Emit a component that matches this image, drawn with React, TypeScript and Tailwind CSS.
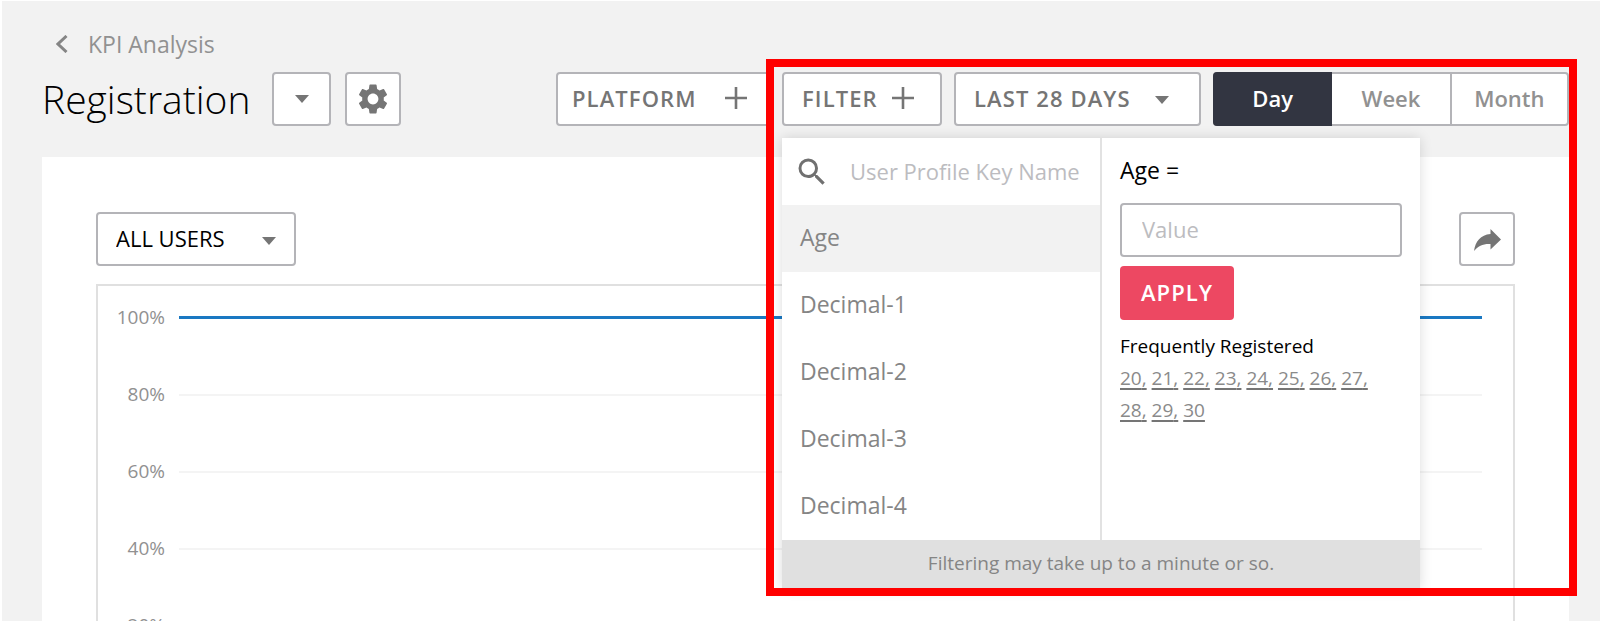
import { useState } from "react";
import { MdSearch, MdSettings } from "react-icons/md";

const PROFILE_KEYS = ["Age", "Decimal-1", "Decimal-2", "Decimal-3", "Decimal-4"];
const FREQUENT_VALUES = [20, 21, 22, 23, 24, 25, 26, 27, 28, 29, 30];
const PERIODS = ["Day", "Week", "Month"];
const AXIS_LABELS = ["100%", "80%", "60%", "40%", "20%"];

const box = "h-[54px] shrink-0 rounded border-2 border-[#b4b4b8] bg-white";

function Caret({ className = "" }: { className?: string }) {
  return (
    <svg viewBox="0 0 14 8" className={`h-2 w-3.5 ${className}`} fill="#757575" aria-hidden="true">
      <path d="M0 0h14L7 8z" />
    </svg>
  );
}

function Plus() {
  return (
    <svg viewBox="0 0 22 22" className="size-[22px]" stroke="#757575" strokeWidth="2.6" aria-hidden="true">
      <path d="M11 0v22M0 11h22" />
    </svg>
  );
}

function FilterMenu() {
  const [selected, setSelected] = useState("Age");
  const [value, setValue] = useState("");

  return (
    <div className="absolute top-[66px] left-0 z-10 w-[638px] bg-white shadow-[0_0_12px_rgba(0,0,0,0.14)]">
      <div className="flex">
        <div className="w-[320px] border-r-2 border-[#e2e2e2]">
          <label className="flex h-[67px] items-center gap-5 pl-3">
            <MdSearch className="size-9 shrink-0 text-[#707070]" aria-hidden="true" />
            <input
              type="search"
              aria-label="User Profile Key Name"
              placeholder="User Profile Key Name"
              className="w-full min-w-0 text-[22px] outline-none placeholder:text-[#bcbcc0]"
            />
          </label>
          <ul>
            {PROFILE_KEYS.map((key) => (
              <li key={key}>
                <button
                  type="button"
                  onClick={() => setSelected(key)}
                  className={`block h-[67px] w-full pb-0.5 pl-[18px] text-left text-[23px] text-[#858585] ${
                    key === selected ? "bg-[#f2f2f2]" : ""
                  }`}
                >
                  {key}
                </button>
              </li>
            ))}
          </ul>
        </div>

        <form className="flex-1 px-[18px]" onSubmit={(event) => event.preventDefault()}>
          <label htmlFor="filter-value" className="flex h-[65px] items-center text-[23px] text-black">
            {selected} =
          </label>
          <input
            id="filter-value"
            type="text"
            placeholder="Value"
            value={value}
            onChange={(event) => setValue(event.target.value)}
            className={`${box} block w-full px-5 pb-0.5 text-[22px] outline-none placeholder:text-[#bcbcc0]`}
          />
          <button
            type="submit"
            className="mt-[9px] h-[54px] w-[114px] rounded bg-[#ed4862] pb-0.5 text-[22px] font-semibold tracking-wider text-white"
          >
            APPLY
          </button>
          <h2 className="mt-2.5 text-[19px] leading-8 text-black">Frequently Registered</h2>
          <p className="w-64 text-[19px] leading-8 text-[#8a8a8a]">
            {FREQUENT_VALUES.map((item, index) => (
              <span key={item}>
                <a
                  href="#filter-value"
                  onClick={() => setValue(String(item))}
                  className="underline decoration-[#757575] decoration-2 underline-offset-3"
                >
                  {item}
                  {index < FREQUENT_VALUES.length - 1 && ","}
                </a>{" "}
              </span>
            ))}
          </p>
        </form>
      </div>
      <p className="h-[49px] bg-[#e0e0e0] text-center text-[19px] leading-[46px] text-[#858585]">
        Filtering may take up to a minute or so.
      </p>
    </div>
  );
}

function Header() {
  const [period, setPeriod] = useState("Day");

  return (
    <header>
      <a href="#kpi" className="flex items-center gap-5 pl-3.5 text-[23px] leading-8 text-[#919191]">
        <svg viewBox="0 0 12 18" className="h-[18px] w-3" fill="none" stroke="#858585" strokeWidth="3" aria-hidden="true">
          <path d="M10.5 1 2 9l8.5 8" />
        </svg>
        KPI Analysis
      </a>

      <div className="mt-3 flex items-center">
        <h1 className="w-[230px] text-[39px] leading-[54px] font-light text-black">Registration</h1>
        <button type="button" aria-label="Choose KPI" className={`${box} flex w-[59px] items-center justify-center`}>
          <Caret />
        </button>
        <button type="button" aria-label="Settings" className={`${box} ml-3.5 flex w-14 items-center justify-center`}>
          <MdSettings className="size-9 text-[#757575]" />
        </button>

        <button
          type="button"
          className={`${box} ml-auto flex w-[214px] items-center justify-between pr-[21px] pb-0.5 pl-3.5 text-[22px] font-semibold tracking-wider text-[#757575]`}
        >
          PLATFORM
          <Plus />
        </button>

        <div className="relative ml-3 flex gap-3">
          <button
            type="button"
            aria-expanded="true"
            className={`${box} flex w-40 items-center justify-between pr-[26px] pb-0.5 pl-[18px] text-[22px] font-semibold tracking-wider text-[#757575]`}
          >
            FILTER
            <Plus />
          </button>
          <div className="grid items-center">
            <select
              aria-label="Date range"
              className={`${box} col-start-1 row-start-1 w-[247px] appearance-none pb-0.5 pl-[18px] text-[22px] font-semibold tracking-wider text-[#757575]`}
            >
              <option>LAST 28 DAYS</option>
            </select>
            <Caret className="pointer-events-none col-start-1 row-start-1 mt-0.5 mr-8 justify-self-end" />
          </div>
          <div role="group" aria-label="Period" className={`${box} flex w-[356px]`}>
            {PERIODS.map((item) => (
              <button
                key={item}
                type="button"
                aria-pressed={item === period}
                onClick={() => setPeriod(item)}
                className={`-my-0.5 w-[118px] pb-0.5 text-[22px] font-semibold first:-ml-0.5 first:w-[120px] first:rounded-l last:border-l-2 last:border-[#b4b4b8] last:bg-clip-padding ${
                  item === period ? "bg-[#323541] text-white" : "text-[#919191]"
                }`}
              >
                {item}
              </button>
            ))}
          </div>

          <FilterMenu />
          {/* callout frame round the filter area */}
          <div className="pointer-events-none absolute -top-[13px] -right-2 -left-4 z-20 h-[537px] border-8 border-[#ff0000]" />
        </div>
      </div>
    </header>
  );
}

function Chart() {
  return (
    <div className="mt-[18px] border-2 border-[#e0e0e0] pr-[31px]">
      {AXIS_LABELS.map((label, index) => (
        <div key={label} className={`flex h-[77px] items-center gap-3.5 ${index === 0 ? "-mt-[7px]" : ""}`}>
          <span className="w-[67px] text-right text-[19px] text-[#919191]">{label}</span>
          <span className={index === 0 ? "h-[3px] flex-1 bg-[#1a78c2]" : "h-0.5 flex-1 bg-[#f4f4f4]"} />
        </div>
      ))}
    </div>
  );
}

export default function App() {
  return (
    <div className="h-screen overflow-hidden border-t border-l-2 border-white bg-[#f2f2f2] pt-[27px] pr-[31px] pl-10 font-['Open_Sans',sans-serif]">
      <Header />
      <main className="mt-[31px] min-h-screen bg-white px-[54px] pt-[55px]">
        <div className="flex items-center justify-between">
          <div className="grid items-center">
            <select
              aria-label="User segment"
              className={`${box} col-start-1 row-start-1 w-[200px] appearance-none pb-0.5 pl-[18px] text-[22px] text-black`}
            >
              <option>ALL USERS</option>
            </select>
            <Caret className="pointer-events-none col-start-1 row-start-1 mt-1 mr-5 justify-self-end" />
          </div>
          <button type="button" aria-label="Share" className={`${box} flex w-14 items-center justify-center pt-0.5`}>
            <svg viewBox="0 0 27 22" className="h-[22px] w-[27px]" fill="#757575" aria-hidden="true">
              <path d="M16.500 0 27 10.500 16.500 20.500V15C9.500 14.500 4 17 0 22 1.500 12 6.500 6 16.500 5z" />
            </svg>
          </button>
        </div>
        <Chart />
      </main>
    </div>
  );
}
